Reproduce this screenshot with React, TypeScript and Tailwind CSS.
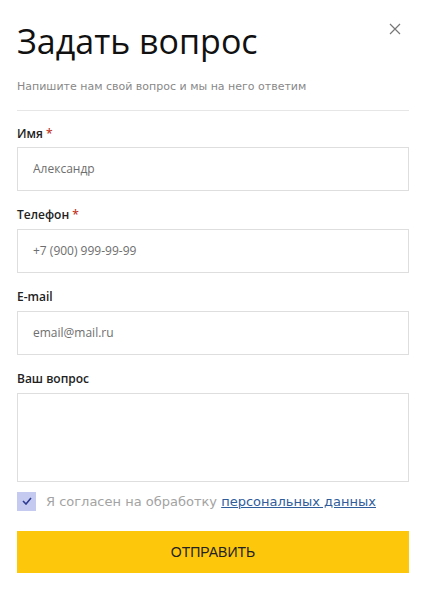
import React from "react";

const labelCls = "text-[12px] text-[#222] font-semibold leading-none";
const inputCls =
  "w-full h-[44px] border border-[#dedede] bg-white px-[15px] text-[12px] text-[#6e6e6e] outline-none";

export default function App() {
  return (
    <div className="w-[426px] h-[600px] bg-white relative" style={{ fontFamily: '"Open Sans", "Noto Sans", sans-serif' }}>
      <button className="absolute left-[388px] top-[22px] w-[14px] h-[14px] flex items-center justify-center">
        <svg width="12" height="12" viewBox="0 0 12 12">
          <path d="M1 1 L11 11 M11 1 L1 11" stroke="#777" strokeWidth="1.2" />
        </svg>
      </button>
      <div className="px-[17px] pt-[21px]">
        <h1 className="text-[34px] leading-[40px] text-[#111] font-normal">Задать вопрос</h1>
        <p className="mt-[18px] text-[11px] text-[#888]" style={{ fontFamily: '"DejaVu Sans", Verdana, sans-serif' }}>
          Напишите нам свой вопрос и мы на него ответим
        </p>
        <div className="mt-[14px] h-px bg-[#e6e6e6]" />
        <div className="mt-[17px] flex flex-col">
          <div className={labelCls}>
            Имя <span className="text-[#c0392b]">*</span>
          </div>
          <input className={inputCls + " mt-[7px]"} defaultValue="Александр" />
          <div className={labelCls + " mt-[18px]"}>
            Телефон <span className="text-[#c0392b]">*</span>
          </div>
          <input className={inputCls + " mt-[8px]"} defaultValue="+7 (900) 999-99-99" />
          <div className={labelCls + " mt-[18px]"}>E-mail</div>
          <input className={inputCls + " mt-[8px]"} defaultValue="email@mail.ru" />
          <div className={labelCls + " mt-[18px]"}>Ваш вопрос</div>
          <textarea className="mt-[8px] w-full h-[89px] border border-[#dedede] resize-none outline-none" />
          <div className="mt-[10px] flex items-center gap-[10px]">
            <div className="w-[19px] h-[19px] bg-[#c5caf0] flex items-center justify-center">
              <svg width="10" height="8" viewBox="0 0 10 8">
                <path d="M1 4 L4 7 L9 1" stroke="#2c3a8f" strokeWidth="1.6" fill="none" />
              </svg>
            </div>
            <span className="text-[13px] text-[#a3a3a3]" style={{ fontFamily: '"DejaVu Sans", Verdana, sans-serif' }}>
              Я согласен на обработку{" "}
              <a className="text-[#2f5d9b] underline">персональных данных</a>
            </span>
          </div>
          <button
            className="mt-[20px] w-full h-[42px] bg-[#fdc70c] text-[14px] text-[#222] uppercase"
            style={{ fontFamily: '"Liberation Sans", Arial, sans-serif' }}
          >
            Отправить
          </button>
        </div>
      </div>
    </div>
  );
}
